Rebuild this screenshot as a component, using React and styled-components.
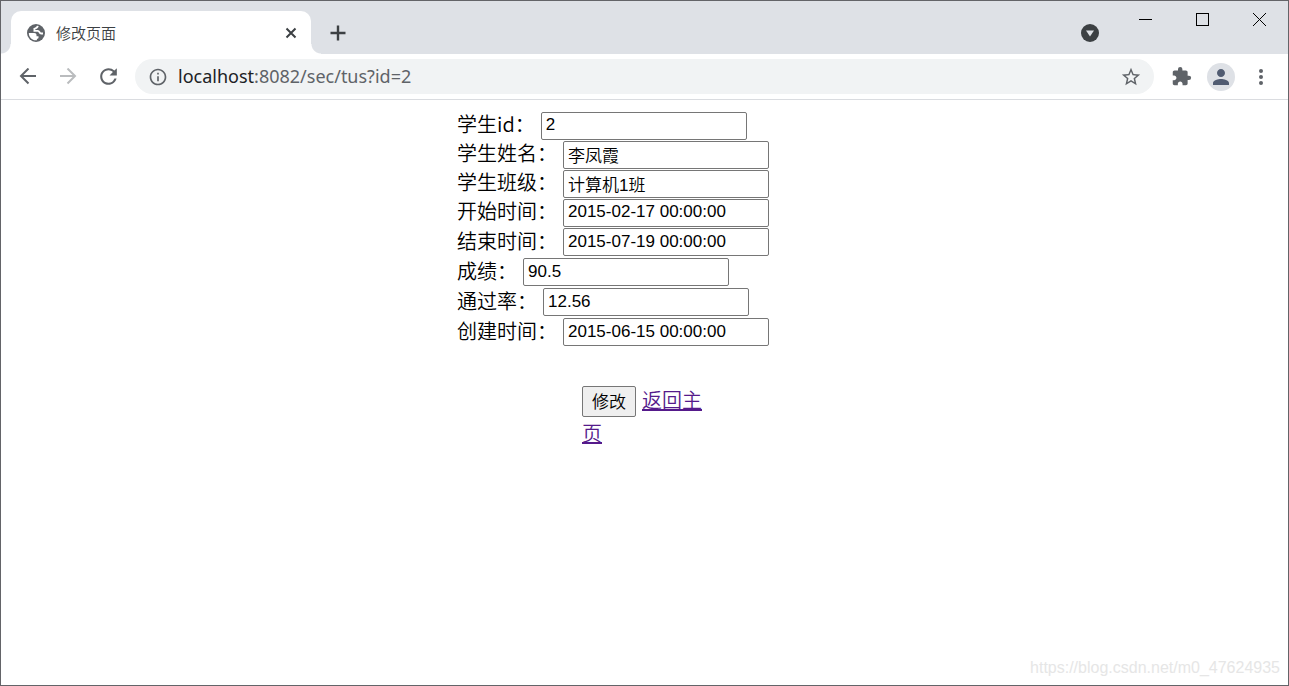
import { useState } from "react"
import styled, { createGlobalStyle } from "styled-components"
import { MdExtension, MdInfoOutline, MdPerson, MdRefresh, MdStarBorder } from "react-icons/md"

const GlobalStyle = createGlobalStyle`
  * {
    box-sizing: border-box;
  }

  body {
    margin: 0;
    background: #fff;
    font-family: "Noto Sans", "Noto Sans CJK SC", sans-serif;
  }
`

const Window = styled.div`
  display: flex;
  flex-direction: column;
  min-height: 100vh;
  border: 1px solid #636468;
  background: #fff;
`

const IconButton = styled.button`
  display: flex;
  align-items: center;
  justify-content: center;
  width: 28px;
  height: 28px;
  padding: 0;
  border: 0;
  border-radius: 50%;
  background: ${({ $fill }) => $fill || "transparent"};
  color: ${({ $color }) => $color || "#5f6368"};
`

const TabStrip = styled.header`
  display: flex;
  align-items: flex-end;
  height: 53px;
  padding-left: 10px;
  background: #dee1e6;
`

const Tab = styled.div`
  position: relative;
  display: flex;
  align-items: center;
  gap: 10px;
  width: 300px;
  height: 43px;
  padding: 0 6px 0 15px;
  border-radius: 10px 10px 0 0;
  background: #fff;
  color: #5f6368;

  &::before,
  &::after {
    content: "";
    position: absolute;
    bottom: 0;
    width: 10px;
    height: 10px;
  }

  &::before {
    right: 100%;
    background: radial-gradient(circle at 0 0, #dee1e6 9px, #fff 10px);
  }

  &::after {
    left: 100%;
    background: radial-gradient(circle at 100% 0, #dee1e6 9px, #fff 10px);
  }
`

const TabTitle = styled.span`
  flex: 1;
  font-size: 15px;
  font-weight: 350;
  line-height: 20px;
  color: #3c4043;
`

const StripButtons = styled.div`
  display: flex;
  align-items: center;
  flex: ${({ $grow }) => ($grow ? 1 : "none")};
  height: 42px;
  padding: 0 13px;
`

const CaptionButtons = styled.div`
  display: flex;
  align-self: flex-start;
`

const CaptionButton = styled.button`
  display: flex;
  align-items: center;
  justify-content: center;
  width: 57px;
  height: 37px;
  padding: 0;
  border: 0;
  background: transparent;
  color: #000;
`

const Toolbar = styled.nav`
  display: flex;
  align-items: center;
  gap: 12px;
  height: 46px;
  padding: 0 13px;
  border-bottom: 1px solid #dadce0;
`

const AddressBar = styled.div`
  display: flex;
  align-items: center;
  flex: 1;
  height: 35px;
  margin: 0 1px;
  padding: 0 9px 0 13px;
  border-radius: 18px;
  background: #f1f3f4;
  color: #5f6368;
`

const Address = styled.span`
  flex: 1;
  padding: 0 0 2px 10px;
  font-size: 18px;
  line-height: 24px;

  b {
    font-weight: 400;
    color: #202124;
  }
`

const Tools = styled.div`
  display: flex;
  align-items: center;
  gap: 12px;
`

const Page = styled.main`
  flex: 1;
  padding-top: 11px;
`

const Form = styled.form`
  width: 375px;
  margin: 0 auto;
  font-family: "Noto Sans CJK SC", sans-serif;
  font-size: 20px;
  font-weight: 350;
`

const Row = styled.div`
  display: flex;
  align-items: center;
  gap: 6px;
  height: ${({ $tall }) => ($tall ? 30 : 29)}px;

  label {
    line-height: 24px;
    padding-bottom: 3px;
  }
`

const TextInput = styled.input`
  width: 206px;
  height: 28px;
  padding: 0 4px 1px;
  border: 1px solid #767676;
  border-radius: 2px;
  background: #fff;
  color: #000;
  font: 350 17px "Liberation Sans", "Noto Sans CJK SC", sans-serif;
`

const Actions = styled.div`
  width: 125px;
  margin: 37px auto 0;
  line-height: 31px;
`

const SubmitButton = styled.button`
  height: 31px;
  margin-right: 6px;
  padding: 0 9px 2px;
  border: 1px solid #767676;
  border-radius: 2px;
  background: #efefef;
  color: #000;
  font: 350 17px "Liberation Sans", "Noto Sans CJK SC", sans-serif;
`

const HomeLink = styled.a`
  color: #551a8b;
  text-decoration: underline;
`

const Watermark = styled.footer`
  padding: 0 8px 6px;
  text-align: right;
  font: 16px/22px "Liberation Sans", sans-serif;
  color: #e6e6e6;
`

const ArrowIcon = ({ flip }) => (
  <svg width="18" height="18" viewBox="0 0 18 18" fill="none" stroke="currentColor" strokeWidth="2">
    <path d={flip ? "M1 8h15M8.5 0.5L16 8l-7.5 7.5" : "M17 8H2M9.5 0.5L2 8l7.5 7.5"} />
  </svg>
)

const GlobeIcon = () => (
  <svg width="20" height="20" viewBox="0 0 20 20">
    <circle cx="10" cy="10" r="9" fill="currentColor" />
    <path
      d="M2.8 10h5.4c1.5 0 2.3.9 2.3 2v1.2h2v1.6c0 .8-.8 1-1.6 1.2v1.2C6.5 17.8 2.8 14.5 2.8 10z"
      fill="#fff"
    />
    <path d="M11.8 2.9c-.3 1.9-1.3 2.3-3.4 2.9v2h3.4c1.7 0 1.7 2.3 3.1 2.7h2.1" fill="none" stroke="#fff" strokeWidth="1.8" />
  </svg>
)

const fields = [
  { name: "id", label: "学生id：", value: "2" },
  { name: "name", label: "学生姓名：", value: "李凤霞" },
  { name: "className", label: "学生班级：", value: "计算机1班" },
  { name: "startTime", label: "开始时间：", value: "2015-02-17 00:00:00" },
  { name: "endTime", label: "结束时间：", value: "2015-07-19 00:00:00", tall: true },
  { name: "score", label: "成绩：", value: "90.5", tall: true },
  { name: "passRate", label: "通过率：", value: "12.56", tall: true },
  { name: "createTime", label: "创建时间：", value: "2015-06-15 00:00:00", tall: true },
]

const Field = ({ name, label, value, tall }) => {
  const [text, setText] = useState(value)
  return (
    <Row $tall={tall}>
      <label htmlFor={name}>{label}</label>
      <TextInput id={name} name={name} value={text} onChange={(e) => setText(e.target.value)} />
    </Row>
  )
}

const BrowserTabs = () => (
  <TabStrip>
    <Tab>
      <GlobeIcon />
      <TabTitle>修改页面</TabTitle>
      <IconButton $color="#3c4043">
        <svg width="12" height="12" viewBox="0 0 12 12" stroke="currentColor" strokeWidth="2">
          <path d="M1.5 1.5l9 9M10.5 1.5l-9 9" />
        </svg>
      </IconButton>
    </Tab>
    <StripButtons $grow>
      <IconButton $color="#3c4043">
        <svg width="16" height="16" viewBox="0 0 16 16" stroke="currentColor" strokeWidth="2.4">
          <path d="M8 0.5v15M0.5 8h15" />
        </svg>
      </IconButton>
    </StripButtons>
    <StripButtons>
      <IconButton>
        <svg width="18" height="18" viewBox="0 0 18 18">
          <circle cx="9" cy="9" r="9" fill="#3c4043" />
          <path d="M5 6.5h8L9 12.5z" fill="#dee1e6" />
        </svg>
      </IconButton>
    </StripButtons>
    <CaptionButtons>
      <CaptionButton>
        <svg width="13" height="13" shapeRendering="crispEdges">
          <path d="M0 6h13v1H0z" />
        </svg>
      </CaptionButton>
      <CaptionButton>
        <svg width="13" height="13" fill="none" stroke="currentColor">
          <rect x="0.5" y="0.5" width="12" height="12" />
        </svg>
      </CaptionButton>
      <CaptionButton>
        <svg width="13" height="13" stroke="currentColor">
          <path d="M0 0l13 13M13 0L0 13" />
        </svg>
      </CaptionButton>
    </CaptionButtons>
  </TabStrip>
)

const BrowserToolbar = () => (
  <Toolbar>
    <IconButton>
      <ArrowIcon />
    </IconButton>
    <IconButton $color="#babcbe">
      <ArrowIcon flip />
    </IconButton>
    <IconButton>
      <MdRefresh size={25} />
    </IconButton>
    <AddressBar>
      <MdInfoOutline size={20} />
      <Address>
        <b>localhost</b>:8082/sec/tus?id=2
      </Address>
      <IconButton>
        <MdStarBorder size={22} />
      </IconButton>
    </AddressBar>
    <Tools>
      <IconButton>
        <MdExtension size={21} />
      </IconButton>
      <IconButton $fill="#dee1e6" $color="#515c72">
        <MdPerson size={24} />
      </IconButton>
      <IconButton>
        <svg width="4" height="16" viewBox="0 0 4 16" fill="currentColor">
          <circle cx="2" cy="2" r="2" />
          <circle cx="2" cy="8" r="2" />
          <circle cx="2" cy="14" r="2" />
        </svg>
      </IconButton>
    </Tools>
  </Toolbar>
)

const App = () => (
  <>
    <GlobalStyle />
    <Window>
      <BrowserTabs />
      <BrowserToolbar />
      <Page>
        <Form onSubmit={(e) => e.preventDefault()}>
          {fields.map((field) => (
            <Field key={field.name} {...field} />
          ))}
          <Actions>
            <SubmitButton type="submit">修改</SubmitButton>
            <HomeLink href="#">返回主页</HomeLink>
          </Actions>
        </Form>
      </Page>
      <Watermark>https://blog.csdn.net/m0_47624935</Watermark>
    </Window>
  </>
)

export default App
